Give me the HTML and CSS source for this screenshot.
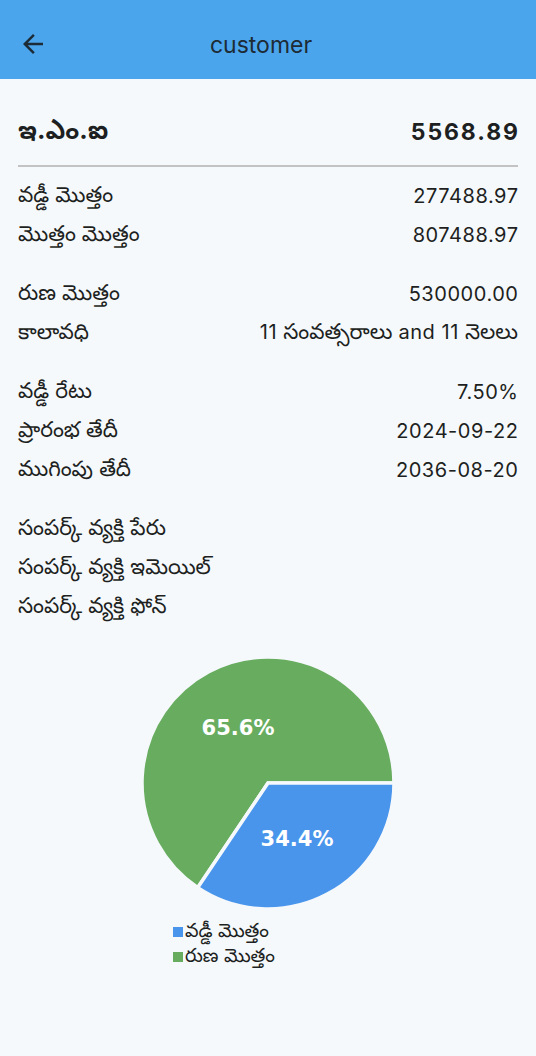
FILE: index.html
```html
<!DOCTYPE html>
<html lang="te">
<head>
<meta charset="utf-8">
<title>customer</title>
<link rel="stylesheet" href="styles.css">
</head>
<body>
<header class="appbar">
  <span class="back">
    <svg width="30" height="30" viewBox="0 0 24 24"><path d="M20 11H7.83l5.59-5.59L12 4l-8 8 8 8 1.41-1.41L7.83 13H20v-2z" fill="#1d2b36"/></svg>
  </span>
  <h1 class="title">customer</h1>
</header>
<main class="content">
  <div class="emi">
    <span>ఇ.ఎం.ఐ</span>
    <span class="num">5568.89</span>
  </div>
  <hr class="divider">
  <section class="group first">
    <div class="row"><span>వడ్డీ మొత్తం</span><span class="num">277488.97</span></div>
    <div class="row"><span>మొత్తం మొత్తం</span><span class="num">807488.97</span></div>
  </section>
  <section class="group">
    <div class="row"><span>రుణ మొత్తం</span><span class="num">530000.00</span></div>
    <div class="row"><span>కాలావధి</span><span><span class="lat">11</span> సంవత్సరాలు <span class="lat">and 11</span> నెలలు</span></div>
  </section>
  <section class="group">
    <div class="row"><span>వడ్డీ రేటు</span><span class="num">7.50%</span></div>
    <div class="row"><span>ప్రారంభ తేదీ</span><span class="num">2024-09-22</span></div>
    <div class="row"><span>ముగింపు తేదీ</span><span class="num">2036-08-20</span></div>
  </section>
  <section class="group">
    <div class="row"><span>సంపర్క్ వ్యక్తి పేరు</span></div>
    <div class="row"><span>సంపర్క్ వ్యక్తి ఇమెయిల్</span></div>
    <div class="row"><span>సంపర్క్ వ్యక్తి ఫోన్</span></div>
  </section>
  <div class="chart">
    <svg width="260" height="260" viewBox="0 0 260 260">
      <path d="M130,130 L59.8,234.6 A126,126 0 1 1 256,130 Z" fill="#68ad5f" stroke="#f5f9fc" stroke-width="3.5" stroke-linejoin="miter"/>
      <path d="M130,130 L256,130 A126,126 0 0 1 59.8,234.6 Z" fill="#4a95ec" stroke="#f5f9fc" stroke-width="3.5" stroke-linejoin="miter"/>
      <text x="100" y="75" class="pct">65.6%</text>
      <text x="159" y="186" class="pct">34.4%</text>
    </svg>
  </div>
  <ul class="legend">
    <li><i class="sw blue"></i>వడ్డీ మొత్తం</li>
    <li><i class="sw green"></i>రుణ మొత్తం</li>
  </ul>
</main>
</body>
</html>
```
FILE: styles.css
```css
html, body {
  margin: 0;
  padding: 0;
  background: #f5f9fc;
}
body {
  width: 536px;
  height: 1056px;
  overflow: hidden;
  font-family: Inter, "Noto Sans Telugu", "Noto Sans", sans-serif;
  color: #1d1f21;
}
.appbar {
  height: 79px;
  box-sizing: border-box;
  padding-top: 10px;
  background: #4ba5ed;
  display: flex;
  align-items: center;
}
.back {
  width: 56px;
  display: flex;
  justify-content: flex-start;
  padding-left: 18px;
  box-sizing: border-box;
  margin-top: -1px;
}
.back svg { display: block; }
.title {
  flex: 1;
  margin: 0;
  padding-right: 70px;
  text-align: center;
  font-weight: 400;
  font-size: 23px;
  color: #1d2b36;
}
.content {
  padding: 36px 18px 0 18px;
}
.emi {
  display: flex;
  justify-content: space-between;
  align-items: center;
  height: 34px;
  font-size: 25.5px;
  font-weight: 700;
  color: #1d1f21;
}
.emi .num {
  font-size: 23px;
  letter-spacing: 1.9px;
  margin-right: -1.9px;
}
.divider {
  border: none;
  height: 1.5px;
  background: #c3c3c3;
  margin: 16px 0 0 0;
}
.group { margin-top: 20px; }
.group.first { margin-top: 10px; }
.row {
  display: flex;
  justify-content: space-between;
  align-items: center;
  height: 39px;
  font-size: 21.5px;
}
.num, .lat {
  font-size: 20px;
  letter-spacing: 0.55px;
}
.row .num { margin-right: -0.55px; }
.chart {
  display: flex;
  justify-content: center;
  margin-top: 26px;
}
.chart svg { display: block; }
.pct {
  fill: #ffffff;
  font-family: "DejaVu Sans", sans-serif;
  font-weight: 700;
  font-size: 21px;
  text-anchor: middle;
  dominant-baseline: central;
}
.legend {
  list-style: none;
  margin: 7px 0 0 155px;
  padding: 0;
  font-size: 19px;
}
.legend li {
  display: flex;
  align-items: center;
  height: 25px;
}
.sw {
  display: inline-block;
  width: 10px;
  height: 10px;
  margin-right: 2px;
}
.sw.blue { background: #4a95ec; }
.sw.green { background: #68ad5f; }
```
